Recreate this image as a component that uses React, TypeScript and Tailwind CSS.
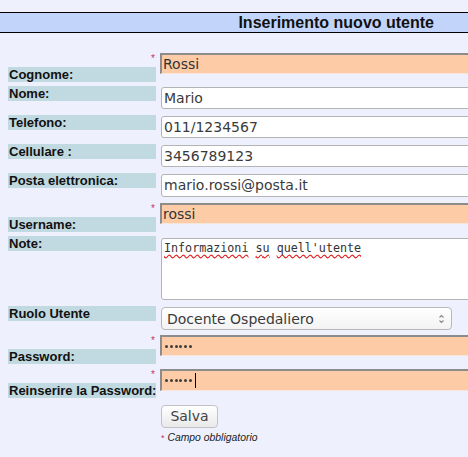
import React from "react";

const labelCls =
  "h-[15px] bg-[#c1d9e0] pl-px text-[13px] leading-[15px] font-bold text-[#111] whitespace-nowrap";
const reqInputCls =
  "h-[21px] w-[330px] bg-[#fdcca6] border-t-2 border-l-2 border-b border-t-[#8c8c8c] border-l-[#8c8c8c] border-b-[#f6e6da] pl-px text-[14px] leading-[18px] text-[#333] whitespace-nowrap overflow-hidden";
const inputCls =
  "mt-px h-[22px] w-[330px] bg-white border border-[#b4b4b4] rounded-[3px] pl-[2px] text-[14px] leading-[20px] text-[#3a3a3a] whitespace-nowrap overflow-hidden";

function Asterisk() {
  return (
    <div className="h-[14px] text-right text-[10px] leading-[12px] text-[#c8326a] pr-px">*</div>
  );
}

function Row({
  label,
  required = false,
  className = "",
  children,
}: {
  label: string;
  required?: boolean;
  className?: string;
  children: React.ReactNode;
}) {
  return (
    <div className={`flex items-start ${className}`}>
      <div className="w-[148px] shrink-0 flex flex-col">
        {required && <Asterisk />}
        <div className={labelCls}>{label}</div>
      </div>
      <div className={required ? "ml-1" : "ml-[5px]"}>{children}</div>
    </div>
  );
}

function Dots({ cursor = false }: { cursor?: boolean }) {
  return (
    <div className="flex items-center h-full pl-[2px] gap-[1.8px]">
      {[0, 1, 2, 3, 4, 5].map((i) => (
        <span key={i} className="inline-block w-[3px] h-[3px] rounded-full bg-[#3c3c3c]" />
      ))}
      {cursor && <span className="ml-px inline-block w-px h-[15px] bg-black" />}
    </div>
  );
}

export default function App() {
  const sans = { fontFamily: '"DejaVu Sans", sans-serif' };
  return (
    <div
      className="w-[468px] h-[457px] overflow-hidden bg-[#eef1fd]"
      style={{ fontFamily: '"Liberation Sans", Arial, sans-serif' }}
    >
      {/* title bar */}
      <div className="mt-3 h-[21px] bg-[#c3d4fb] border-y border-black flex items-center justify-end pr-[34px]">
        <span className="text-[16px] font-bold leading-[19px] text-[#111]">Inserimento nuovo utente</span>
      </div>

      <div className="pl-2 pt-5">
        <Row label="Cognome:" required>
          <div className={reqInputCls} style={sans}>Rossi</div>
        </Row>

        <Row label="Nome:" className="mt-1">
          <div className={inputCls} style={sans}>Mario</div>
        </Row>

        <Row label="Telefono:" className="mt-[6px]">
          <div className={inputCls} style={sans}>011/1234567</div>
        </Row>

        <Row label="Cellulare :" className="mt-[6px]">
          <div className={inputCls} style={sans}>3456789123</div>
        </Row>

        <Row label="Posta elettronica:" className="mt-[6px]">
          <div className={`${inputCls} h-[23px]`} style={sans}>mario.rossi@posta.it</div>
        </Row>

        <Row label="Username:" required className="mt-[6px]">
          <div className={reqInputCls} style={sans}>rossi</div>
        </Row>

        <Row label="Note:" className="mt-1">
          <div className="mt-[2px] h-[62px] w-[330px] bg-white border border-[#b4b4b4] rounded-[3px] pl-[2px] pt-px">
            <div
              className="text-[11.7px] leading-[16px] text-[#333] whitespace-nowrap"
              style={{ fontFamily: '"DejaVu Sans Mono", monospace' }}
            >
              <span className="underline decoration-wavy decoration-[#e02020] underline-offset-2">Informazioni</span>{" "}
              <span className="underline decoration-wavy decoration-[#e02020] underline-offset-2">su</span>{" "}
              <span className="underline decoration-wavy decoration-[#e02020] underline-offset-2">quell'utente</span>
            </div>
          </div>
        </Row>

        <Row label="Ruolo Utente" className="mt-[6px]">
          <div
            className="mt-px h-[23px] w-[291px] rounded-[4px] border border-[#b8b8b8] bg-gradient-to-b from-white to-[#f3f3f3] flex items-center justify-between pl-[5px] pr-[6px] text-[14px] text-[#3a3a3a]"
            style={sans}
          >
            <span className="leading-[20px]">Docente Ospedaliero</span>
            <svg width="7" height="14" viewBox="0 0 7 14">
              <path d="M1.5 5.5 L3.5 3.5 L5.5 5.5" fill="none" stroke="#888" strokeWidth="1.1" />
              <path d="M1.5 8.5 L3.5 10.5 L5.5 8.5" fill="none" stroke="#888" strokeWidth="1.1" />
            </svg>
          </div>
        </Row>

        <Row label="Password:" required className="mt-[5px]">
          <div className={reqInputCls}>
            <Dots />
          </div>
        </Row>

        <Row label="Reinserire la Password:" required className="mt-[5px]">
          <div className={`${reqInputCls} h-[22px]`}>
            <Dots cursor />
          </div>
        </Row>

        <div className="ml-[153px] mt-[6px]">
          <button
            className="h-[23px] w-[57px] rounded-[4px] border border-[#c2c2c2] bg-gradient-to-b from-white to-[#e9e9e9] text-[14px] text-[#444] leading-[20px]"
            style={sans}
          >
            Salva
          </button>
          <div className="mt-[4px] text-[10.4px] leading-[12px] italic text-[#222]">
            <span className="not-italic text-[#c8326a] text-[9px]">*</span> Campo obbligatorio
          </div>
        </div>
      </div>
    </div>
  );
}
